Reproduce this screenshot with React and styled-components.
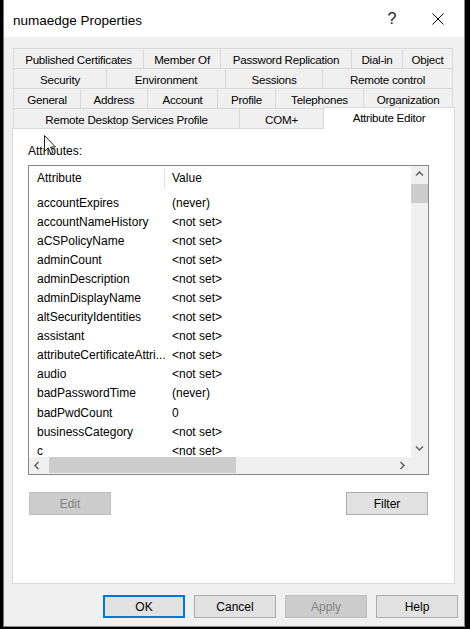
import React from "react"
import styled, { createGlobalStyle } from "styled-components"

const GlobalStyle = createGlobalStyle`
  html, body {
    margin: 0;
    padding: 0;
    background: #000;
  }
  body {
    font-family: "Liberation Sans", Arial, sans-serif;
    font-size: 12px;
    color: #000;
  }
  * {
    box-sizing: border-box;
  }
`

const Screen = styled.div`
  width: 470px;
  height: 629px;
  padding-left: 3px;
  background: #000;
  overflow: hidden;
`

const Window = styled.div`
  width: 462px;
  height: 627px;
  display: flex;
  flex-direction: column;
  background: #f0f0f0;
  border-left: 1px solid #6f7780;
  border-right: 1px solid #8a8a8a;
  border-bottom: 1px solid #8a8a8a;
`

const TitleBar = styled.div`
  height: 37px;
  flex: none;
  display: flex;
  align-items: center;
  padding: 0 3px 0 9px;
  background: #fff;
`

const Title = styled.div`
  font-size: 13.5px;
  margin-top: 3px;
  flex: 1;
`

const TitleButton = styled.div`
  width: 46px;
  height: 30px;
  display: flex;
  align-items: center;
  justify-content: center;
  font-size: 16px;
  color: #222;
`

const Body = styled.div`
  flex: 1;
  display: flex;
  flex-direction: column;
  padding: 11px 0 0 8px;
`

const TabStrip = styled.div`
  width: 443px;
  display: flex;
  flex-direction: column;
`

const TabRow = styled.div`
  height: 20px;
  display: flex;
  margin: ${(p) => (p.$front ? "0 0 0 1px" : "0 2px 0 1px")};
  align-items: flex-end;
`

const Tab = styled.div`
  width: ${(p) => p.$w}px;
  height: 100%;
  display: flex;
  align-items: center;
  justify-content: center;
  background: #f0f0f0;
  border-top: 1px solid #d9d9d9;
  border-right: 1px solid #d9d9d9;
  border-left: ${(p) => (p.$first ? "1px solid #d9d9d9" : "none")};
  font-size: 11.6px;
  letter-spacing: -0.25px;
  white-space: nowrap;
  padding-top: 1px;
`

const ActiveTab = styled(Tab)`
  height: 22px;
  margin-bottom: -1px;
  margin-left: -1px;
  position: relative;
  z-index: 1;
  background: #fff;
  border-left: 1px solid #d9d9d9;
  padding-bottom: 3px;
`

const Panel = styled.div`
  position: relative;
  width: 443px;
  height: 456px;
  background: #fff;
  border: 1px solid #d9d9d9;
  padding: 15px 0 0 15px;
  display: flex;
  flex-direction: column;
`

const Label = styled.div`
  line-height: 14px;
  margin-bottom: 7px;
`

const ListBox = styled.div`
  width: 401px;
  height: 310px;
  border: 1px solid #828790;
  background: #fff;
  display: grid;
  grid-template-columns: 1fr 17px;
  grid-template-rows: 1fr 17px;
  overflow: hidden;
`

const ListContent = styled.div`
  overflow: hidden;
  display: flex;
  flex-direction: column;
`

const HeaderRow = styled.div`
  height: 24px;
  flex: none;
  display: flex;
  align-items: center;
`

const HeaderCell = styled.div`
  position: relative;
  width: ${(p) => (p.$first ? "136px" : "auto")};
  padding-left: ${(p) => (p.$first ? "8px" : "7px")};
  height: 100%;
  display: flex;
  align-items: center;
  &::after {
    content: "";
    display: ${(p) => (p.$first ? "block" : "none")};
    position: absolute;
    right: 0;
    top: 2px;
    bottom: 0;
    width: 1px;
    background: #e5e5e5;
  }
`

const Rows = styled.div`
  padding-top: 3px;
`

const Row = styled.div`
  height: 19.1px;
  line-height: 14px;
  display: flex;
  align-items: center;
  white-space: nowrap;
`

const Cell = styled.div`
  width: ${(p) => (p.$first ? "136px" : "auto")};
  padding-left: ${(p) => (p.$first ? "8px" : "7px")};
  overflow: hidden;
`

const VScroll = styled.div`
  background: #f0f0f0;
  display: flex;
  flex-direction: column;
`

const HScroll = styled.div`
  background: #f0f0f0;
  display: flex;
  align-items: stretch;
`

const Corner = styled.div`
  background: #f0f0f0;
`

const ArrowButton = styled.div`
  width: 17px;
  height: 17px;
  flex: none;
  display: flex;
  align-items: center;
  justify-content: center;
`

const VThumb = styled.div`
  height: 19px;
  margin: 1px 0 0 0;
  background: #cdcdcd;
`

const HThumb = styled.div`
  width: 187px;
  margin: 0 0 1px 3px;
  background: #cdcdcd;
`

const Spacer = styled.div`
  flex: 1;
`

const ActionRow = styled.div`
  width: 401px;
  display: flex;
  justify-content: space-between;
  padding: 0 1px;
  margin-top: 17px;
`

const Button = styled.div`
  width: 82px;
  height: 23px;
  display: flex;
  align-items: center;
  justify-content: center;
  background: ${(p) => (p.$disabled ? "#cccccc" : "#e1e1e1")};
  color: ${(p) => (p.$disabled ? "#838383" : "#000")};
  border: ${(p) =>
    p.$default
      ? "2px solid #0078d7"
      : p.$disabled
      ? "1px solid #bfbfbf"
      : "1px solid #adadad"};
  font-size: 12px;
`

const Footer = styled.div`
  display: flex;
  justify-content: flex-end;
  gap: 9px;
  padding: 11px 6px 0 0;
`

const Cursor = styled.svg`
  position: absolute;
  left: 31px;
  top: 6px;
`

const tabRows = [
  [
    ["Published Certificates", 131],
    ["Member Of", 77],
    ["Password Replication", 131],
    ["Dial-in", 51],
    ["Object", 50],
  ],
  [
    ["Security", 94],
    ["Environment", 119],
    ["Sessions", 97],
    ["Remote control", 130],
  ],
  [
    ["General", 68],
    ["Address", 67],
    ["Account", 70],
    ["Profile", 58],
    ["Telephones", 88],
    ["Organization", 89],
  ],
]

const attributes = [
  ["accountExpires", "(never)"],
  ["accountNameHistory", "<not set>"],
  ["aCSPolicyName", "<not set>"],
  ["adminCount", "<not set>"],
  ["adminDescription", "<not set>"],
  ["adminDisplayName", "<not set>"],
  ["altSecurityIdentities", "<not set>"],
  ["assistant", "<not set>"],
  ["attributeCertificateAttri...", "<not set>"],
  ["audio", "<not set>"],
  ["badPasswordTime", "(never)"],
  ["badPwdCount", "0"],
  ["businessCategory", "<not set>"],
  ["c", "<not set>"],
]

const Chevron = ({ dir }) => {
  const paths = {
    up: "M1 5.5 L4.5 2 L8 5.5",
    down: "M1 2.5 L4.5 6 L8 2.5",
    left: "M5.5 1 L2 4.5 L5.5 8",
    right: "M2.5 1 L6 4.5 L2.5 8",
  }
  return (
    <svg width="9" height="9" viewBox="0 0 9 9">
      <path d={paths[dir]} fill="none" stroke="#606060" strokeWidth="1.5" />
    </svg>
  )
}

export default function App() {
  return (
    <Screen>
      <GlobalStyle />
      <Window>
        <TitleBar>
          <Title>numaedge Properties</Title>
          <TitleButton>?</TitleButton>
          <TitleButton>
            <svg width="12" height="12" viewBox="0 0 12 12">
              <path d="M0.5 0.5 L11.5 11.5 M11.5 0.5 L0.5 11.5" stroke="#000" strokeWidth="1" />
            </svg>
          </TitleButton>
        </TitleBar>
        <Body>
          <TabStrip>
            {tabRows.map((row, i) => (
              <TabRow key={i}>
                {row.map(([name, w], j) => (
                  <Tab key={name} $w={w} $first={j === 0}>
                    {name}
                  </Tab>
                ))}
              </TabRow>
            ))}
            <TabRow $front>
              <Tab $w={227} $first>
                Remote Desktop Services Profile
              </Tab>
              <Tab $w={84}>COM+</Tab>
              <ActiveTab $w={132}>Attribute Editor</ActiveTab>
            </TabRow>
          </TabStrip>
          <Panel>
            <Label>Attributes:</Label>
            <ListBox>
              <ListContent>
                <HeaderRow>
                  <HeaderCell $first>Attribute</HeaderCell>
                  <HeaderCell>Value</HeaderCell>
                </HeaderRow>
                <Rows>
                  {attributes.map(([name, value]) => (
                    <Row key={name}>
                      <Cell $first>{name}</Cell>
                      <Cell>{value}</Cell>
                    </Row>
                  ))}
                </Rows>
              </ListContent>
              <VScroll>
                <ArrowButton>
                  <Chevron dir="up" />
                </ArrowButton>
                <VThumb />
                <Spacer />
                <ArrowButton>
                  <Chevron dir="down" />
                </ArrowButton>
              </VScroll>
              <HScroll>
                <ArrowButton>
                  <Chevron dir="left" />
                </ArrowButton>
                <HThumb />
                <Spacer />
                <ArrowButton>
                  <Chevron dir="right" />
                </ArrowButton>
              </HScroll>
              <Corner />
            </ListBox>
            <ActionRow>
              <Button $disabled>Edit</Button>
              <Button>Filter</Button>
            </ActionRow>
            <Cursor width="13" height="21" viewBox="0 0 13 21">
              <path
                d="M0.5 0.5 L0.5 16.5 L4.3 12.8 L6.8 18.6 L9 17.6 L6.6 12 L11.5 12 Z"
                fill="#fff"
                stroke="#222"
                strokeWidth="1"
                strokeLinejoin="round"
              />
            </Cursor>
          </Panel>
          <Footer>
            <Button $default>OK</Button>
            <Button>Cancel</Button>
            <Button $disabled>Apply</Button>
            <Button>Help</Button>
          </Footer>
        </Body>
      </Window>
    </Screen>
  )
}
